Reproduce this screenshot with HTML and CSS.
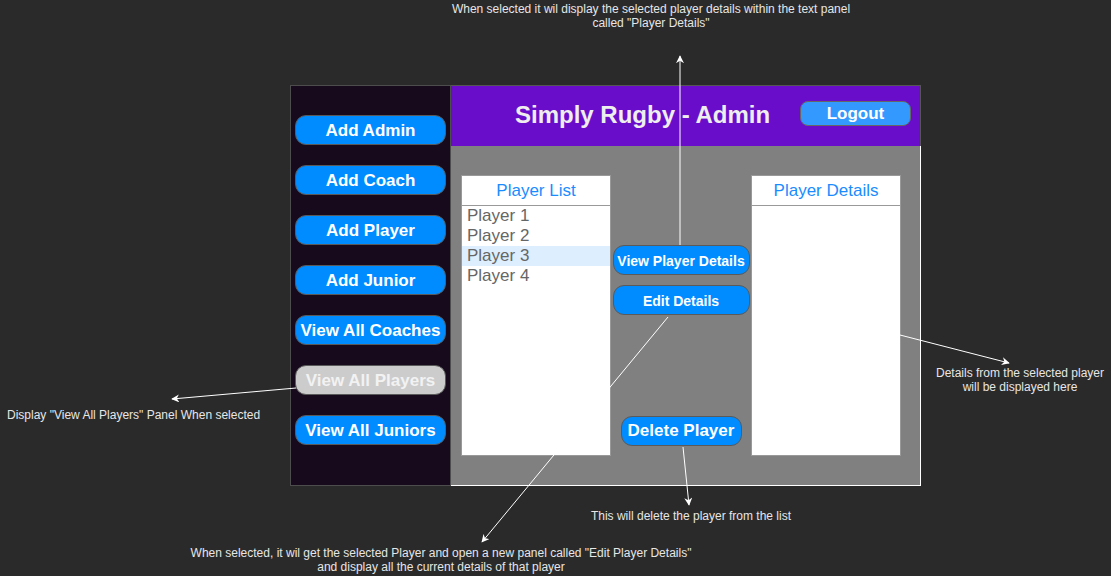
FILE: index.html
```html
<!DOCTYPE html>
<html>
<head>
<meta charset="utf-8">
<link rel="stylesheet" href="styles.css">
</head>
<body>
<div class="canvas">
  <div class="frame">
    <nav class="sidebar">
      <button class="side-btn">Add Admin</button>
      <button class="side-btn">Add Coach</button>
      <button class="side-btn">Add Player</button>
      <button class="side-btn">Add Junior</button>
      <button class="side-btn">View All Coaches</button>
      <button class="side-btn side-btn--active">View All Players</button>
      <button class="side-btn">View All Juniors</button>
    </nav>
    <section class="main">
      <header class="header">
        <h1 class="title">Simply Rugby - Admin</h1>
        <button class="logout">Logout</button>
      </header>
      <div class="content">
        <div class="listbox">
          <div class="listbox-head">Player List</div>
          <ul class="items">
            <li class="item">Player 1</li>
            <li class="item">Player 2</li>
            <li class="item item--sel">Player 3</li>
            <li class="item">Player 4</li>
          </ul>
        </div>
        <div class="actions">
          <button class="act-btn">View Player Details</button>
          <button class="act-btn">Edit Details</button>
          <button class="act-btn act-btn--delete">Delete Player</button>
        </div>
        <div class="listbox">
          <div class="listbox-head">Player Details</div>
        </div>
      </div>
    </section>
  </div>

  <svg class="arrows" width="1111" height="576" viewBox="0 0 1111 576">
    <defs>
      <marker id="ah" viewBox="0 0 10 10" refX="9" refY="5" markerWidth="8" markerHeight="8" markerUnits="userSpaceOnUse" orient="auto">
        <path d="M0,0 L10,5 L0,10 L3,5 Z" fill="#ffffff"/>
      </marker>
    </defs>
    <line x1="680" y1="245" x2="680" y2="56" stroke="#fff" stroke-width="1" marker-end="url(#ah)"/>
    <line x1="296" y1="388" x2="172" y2="399" stroke="#fff" stroke-width="1" marker-end="url(#ah)"/>
    <line x1="900" y1="335" x2="1009" y2="363" stroke="#fff" stroke-width="1" marker-end="url(#ah)"/>
    <line x1="668" y1="317" x2="482" y2="542" stroke="#fff" stroke-width="1" marker-end="url(#ah)"/>
    <line x1="683" y1="447" x2="689" y2="505" stroke="#fff" stroke-width="1" marker-end="url(#ah)"/>
  </svg>

  <p class="note note--top">When selected it wil display the selected player details within the text panel<br>called "Player Details"</p>
  <p class="note note--left">Display "View All Players" Panel When selected</p>
  <p class="note note--right">Details from the selected player<br>will be displayed here</p>
  <p class="note note--delete">This will delete the player from the list</p>
  <p class="note note--edit">When selected, it wil get the selected Player and open a new panel called "Edit Player Details"<br>and display all the current details of that player</p>
</div>
</body>
</html>
```
FILE: styles.css
```css
* { box-sizing: border-box; }
html, body {
  margin: 0;
  padding: 0;
  background: #2a2a2a;
}
body {
  font-family: "Liberation Sans", Arial, sans-serif;
}
.canvas {
  position: relative;
  width: 1111px;
  height: 576px;
  overflow: hidden;
  padding-top: 85px;
  padding-left: 290px;
}
.frame {
  display: flex;
  width: 631px;
  height: 401px;
}
.sidebar {
  width: 161px;
  height: 401px;
  background: #170a1c;
  border: 1px solid #4d4d4d;
  display: flex;
  flex-direction: column;
  gap: 20px;
  padding: 29px 0 0 4px;
}
.side-btn {
  width: 151px;
  height: 30px;
  flex: none;
  border: 1px solid #5a5a5a;
  border-radius: 11px;
  background: #008cff;
  color: #ffffff;
  font-family: "Liberation Sans", Arial, sans-serif;
  font-weight: bold;
  font-size: 17px;
  padding: 2px 0 0 0;
  line-height: 26px;
}
.side-btn--active {
  background: #cccccc;
  color: #f2f2f2;
}
.main {
  width: 470px;
  display: flex;
  flex-direction: column;
}
.header {
  height: 61px;
  background: #6a0dca;
  border-top: 1px solid #555555;
  border-right: 1px solid #555555;
  display: flex;
  align-items: center;
}
.title {
  margin: -2px 0 0 64px;
  font-size: 24px;
  font-weight: bold;
  color: #eeeeee;
  line-height: 28px;
}
.logout {
  margin-left: auto;
  margin-right: 9px;
  margin-top: -5px;
  width: 111px;
  height: 25px;
  border: 1px solid #666666;
  border-radius: 8px;
  background: #3399ff;
  color: #ffffff;
  font-family: "Liberation Sans", Arial, sans-serif;
  font-weight: bold;
  font-size: 17px;
  padding: 0;
  line-height: 22px;
}
.content {
  height: 340px;
  background: #808080;
  border-right: 1px solid #ffffff;
  border-bottom: 1px solid #ffffff;
  display: flex;
  padding: 29px 0 0 10px;
}
.listbox {
  width: 150px;
  height: 281px;
  background: #ffffff;
  border: 1px solid #999999;
}
.listbox-head {
  height: 30px;
  border-bottom: 1px solid #999999;
  color: #1a8cff;
  font-size: 17px;
  text-align: center;
  line-height: 29px;
}
.items {
  list-style: none;
  margin: 0;
  padding: 0;
}
.item {
  height: 20px;
  line-height: 20px;
  font-size: 17px;
  color: #666666;
  padding-left: 5px;
}
.item--sel {
  background: #ddeeff;
}
.actions {
  width: 140px;
  height: 281px;
  display: flex;
  flex-direction: column;
  align-items: center;
  gap: 10px;
  padding: 70px 0 10px 0;
}
.act-btn {
  width: 137px;
  height: 30px;
  flex: none;
  border: 1px solid #5a5a5a;
  border-radius: 11px;
  background: #008cff;
  color: #ffffff;
  font-family: "Liberation Sans", Arial, sans-serif;
  font-weight: bold;
  font-size: 14px;
  padding: 2px 0 0 0;
}
.act-btn--delete {
  width: 121px;
  margin-top: auto;
  font-size: 17px;
  padding-top: 0;
}
.arrows {
  position: absolute;
  left: 0;
  top: 0;
  pointer-events: none;
}
.note {
  position: absolute;
  margin: 0;
  color: #e6e6e6;
  font-size: 12px;
  line-height: 14px;
  text-align: center;
  white-space: nowrap;
}
.note--top { left: 651px; top: 2px; transform: translateX(-50%); }
.note--left { left: 7px; top: 408px; text-align: left; }
.note--right { left: 1020px; top: 366px; transform: translateX(-50%); }
.note--delete { left: 691px; top: 509px; transform: translateX(-50%); }
.note--edit { left: 441px; top: 546px; transform: translateX(-50%); }
```
